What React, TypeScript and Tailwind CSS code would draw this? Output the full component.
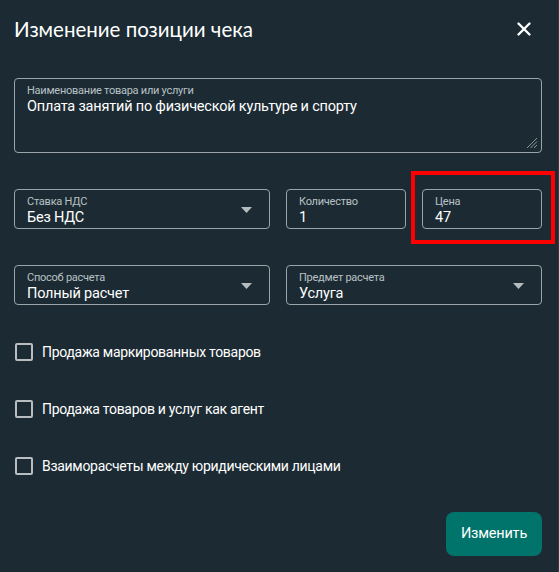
import { X } from "lucide-react";

const BODY_FONT = { fontFamily: "Roboto, 'Noto Sans', sans-serif" };

// Поле формы с подписью сверху и значением снизу
function Field(props: {
  label: string;
  value: string;
  select?: boolean;
  className?: string;
}) {
  return (
    <div
      className={`relative flex h-[40px] items-start rounded-[4px] border border-[#9aa4a9] pl-[12px] pr-[17px] ${props.className ?? ""}`}
    >
      <div className="flex-1 pt-[6px]">
        <div className="text-[11px] leading-[12px] tracking-[-0.25px] text-[#b9c1c5]">
          {props.label}
        </div>
        <div className="text-[14.5px] leading-[19px] tracking-[-0.2px] text-white">
          {props.value}
        </div>
      </div>
      {props.select && (
        <svg
          width="11"
          height="6"
          viewBox="0 0 11 6"
          className="mt-[17px] shrink-0"
        >
          <path d="M0 0h11L5.5 6z" fill="#b4bcc0" />
        </svg>
      )}
    </div>
  );
}

function Check(props: { label: string }) {
  return (
    <label className="flex h-[18px] items-center gap-[9px] pl-[1px]">
      <span className="h-[18px] w-[18px] shrink-0 rounded-[2px] border-2 border-[#b7bdc1]" />
      <span className="text-[14px] leading-[18px] tracking-[-0.3px] text-white">
        {props.label}
      </span>
    </label>
  );
}

export default function App() {
  return (
    <div
      className="flex h-[572px] w-[559px] flex-col border-r border-[#2d3c44] bg-[#1c2b33] pl-[14px] pr-[16px]"
      style={BODY_FONT}
    >
      {/* Заголовок */}
      <div className="flex items-center justify-between pt-[17px]">
        <h2
          className="text-[20.5px] leading-[24px] text-white"
          style={{ fontFamily: "Lato, sans-serif" }}
        >
          Изменение позиции чека
        </h2>
        <X className="mr-[7px] text-white" size={22} strokeWidth={2.6} />
      </div>

      {/* Наименование */}
      <div className="relative mt-[37px] h-[75px] rounded-[4px] border border-[#9aa4a9] pl-[12px] pt-[6px]">
        <div className="text-[11px] leading-[12px] tracking-[-0.25px] text-[#b9c1c5]">
          Наименование товара или услуги
        </div>
        <div className="text-[14.5px] leading-[19px] tracking-[-0.2px] text-white">
          Оплата занятий по физической культуре и спорту
        </div>
        <svg
          width="12"
          height="12"
          viewBox="0 0 12 12"
          className="absolute bottom-[3px] right-[3px]"
        >
          <path
            d="M11 1L1 11M11 4.5L4.5 11M11 8L8 11"
            stroke="#8d969b"
            strokeWidth="1"
          />
        </svg>
      </div>

      {/* Ставка, количество, цена */}
      <div className="mt-[36px] grid grid-cols-[256px_120px_120px] gap-4">
        <Field label="Ставка НДС" value="Без НДС" select />
        <Field label="Количество" value="1" />
        <div className="relative">
          <Field label="Цена" value="47" />
          <div className="pointer-events-none absolute left-[-11px] top-[-18px] h-[73px] w-[144px] border-4 border-[#ff0000]" />
        </div>
      </div>

      {/* Способ и предмет расчета */}
      <div className="mt-[36px] grid grid-cols-2 gap-4">
        <Field label="Способ расчета" value="Полный расчет" select />
        <Field label="Предмет расчета" value="Услуга" select />
      </div>

      <div className="mt-[38px] flex flex-col gap-[39px]">
        <Check label="Продажа маркированных товаров" />
        <Check label="Продажа товаров и услуг как агент" />
        <Check label="Взаиморасчеты между юридическими лицами" />
      </div>

      <div className="mt-[37px] flex justify-end">
        <button className="h-[44px] w-[96px] rounded-[8px] bg-[#00736b] text-[14.5px] tracking-[-0.2px] text-white">
          Изменить
        </button>
      </div>
    </div>
  );
}
